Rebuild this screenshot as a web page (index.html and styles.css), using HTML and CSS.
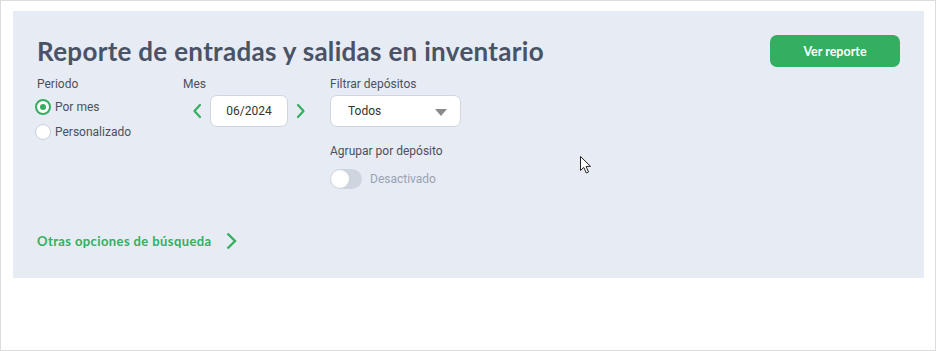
FILE: index.html
```html
<!DOCTYPE html>
<html lang="es">
<head>
<meta charset="utf-8">
<title>Reporte de entradas y salidas en inventario</title>
<link rel="stylesheet" href="styles.css">
</head>
<body>
<div class="frame">
  <section class="panel">
    <header class="head">
      <h1 class="title">Reporte de entradas y salidas en inventario</h1>
      <button class="btn">Ver reporte</button>
    </header>
    <div class="filters">
      <div class="col col-period">
        <div class="label">Periodo</div>
        <label class="radio on"><span class="dot"></span>Por mes</label>
        <label class="radio"><span class="dot"></span>Personalizado</label>
      </div>
      <div class="col col-month">
        <div class="label">Mes</div>
        <div class="month-row">
          <svg class="chev" width="10" height="16" viewBox="0 0 10 16"><path d="M8 2 L2.5 8 L8 14" fill="none" stroke="#34ae60" stroke-width="2.2" stroke-linecap="round" stroke-linejoin="round"/></svg>
          <div class="box month">06/2024</div>
          <svg class="chev" width="10" height="16" viewBox="0 0 10 16"><path d="M2 2 L7.5 8 L2 14" fill="none" stroke="#34ae60" stroke-width="2.2" stroke-linecap="round" stroke-linejoin="round"/></svg>
        </div>
      </div>
      <div class="col col-dep">
        <div class="label">Filtrar depósitos</div>
        <div class="box select">Todos<span class="caret"></span></div>
        <div class="label label-group">Agrupar por depósito</div>
        <div class="toggle-row"><span class="toggle"><span class="knob"></span></span><span class="toggle-text">Desactivado</span></div>
      </div>
    </div>
    <a class="more" href="#">Otras opciones de búsqueda<svg class="more-chev" width="13" height="18" viewBox="0 0 13 18"><path d="M2.5 1.5 L10 9 L2.5 16.5" fill="none" stroke="#34ae60" stroke-width="2.4" stroke-linejoin="miter"/></svg></a>
  </section>
  <svg class="cursor" width="14" height="20" viewBox="0 0 14 20"><path d="M1.5 1.5 L1.5 15.5 L4.8 12.4 L7.3 18 L9.5 17 L7.1 11.5 L11.5 11.3 Z" fill="#fff" stroke="#222" stroke-width="1" stroke-linejoin="miter"/></svg>
</div>
</body>
</html>
```
FILE: styles.css
```css
* { box-sizing: border-box; }
html, body { margin: 0; padding: 0; background: #fff; }
body { font-family: Roboto, "Liberation Sans", Arial, sans-serif; }
.frame {
  position: relative;
  width: 936px;
  height: 351px;
  border: 1px solid #dcdcdc;
  padding: 10px 11px 0 12px;
}
.panel {
  background: #e7ebf3;
  width: 911px;
  height: 267px;
  padding: 24px 24px 0 24px;
  display: flex;
  flex-direction: column;
}
.head {
  display: flex;
  justify-content: space-between;
  align-items: flex-start;
}
.title {
  margin: 0;
  font-family: Lato, sans-serif;
  font-weight: 700;
  font-size: 26px;
  line-height: 30px;
  color: #4a5365;
  padding-top: 1px;
  letter-spacing: 0.3px;
}
.btn {
  width: 130px;
  height: 32px;
  border: 0;
  border-radius: 7px;
  background: #34ae60;
  color: #fff;
  font-family: Lato, sans-serif;
  font-weight: 700;
  font-size: 12.5px;
}
.filters {
  display: flex;
  margin-top: 9px;
}
.col { display: flex; flex-direction: column; }
.col-period { width: 146px; }
.col-month { width: 147px; }
.label {
  font-size: 12px;
  line-height: 16px;
  color: #4b5060;
}
.radio {
  display: flex;
  align-items: center;
  font-size: 12px;
  line-height: 16px;
  color: #4b5060;
  height: 25px;
}
.col-period .label { margin-bottom: 2px; }
.dot {
  width: 16px;
  height: 16px;
  border-radius: 50%;
  background: #fff;
  border: 1.5px solid #c9d0dc;
  margin-right: 4px;
  margin-left: -2px;
  position: relative;
}
.radio.on .dot {
  border: 2px solid #34ae60;
}
.radio.on .dot::after {
  content: "";
  position: absolute;
  left: 3px; top: 3px;
  width: 6px; height: 6px;
  border-radius: 50%;
  background: #34ae60;
}
.month-row {
  display: flex;
  align-items: center;
  margin-top: 3px;
  margin-left: 9px;
  gap: 8px;
}
.box {
  background: #fff;
  border: 1px solid #cfd5e0;
  border-radius: 7px;
  height: 32px;
  display: flex;
  align-items: center;
  font-size: 12px;
  color: #333;
}
.month { width: 78px; justify-content: center; }
.select {
  width: 131px;
  padding-left: 17px;
  margin-top: 3px;
  position: relative;
}
.caret {
  position: absolute;
  right: 13px;
  top: 13px;
  width: 0; height: 0;
  border-left: 6px solid transparent;
  border-right: 6px solid transparent;
  border-top: 7px solid #8a8a8a;
}
.label-group { margin-top: 16px; }
.toggle-row {
  display: flex;
  align-items: center;
  margin-top: 10px;
  gap: 8px;
}
.toggle {
  width: 32px;
  height: 20px;
  border-radius: 10px;
  background: #cfd5df;
  position: relative;
}
.knob {
  position: absolute;
  left: 1px; top: 1px;
  width: 18px; height: 18px;
  border-radius: 50%;
  background: #fff;
}
.toggle-text { font-size: 12px; color: #9aa3b3; }
.more {
  margin-top: auto;
  margin-bottom: 28px;
  display: flex;
  align-items: center;
  font-family: Lato, sans-serif;
  font-weight: 700;
  font-size: 13px;
  color: #34ae60;
  text-decoration: none;
  letter-spacing: 0.4px;
}
.more-chev { margin-left: 13px; }
.cursor { position: absolute; left: 578px; top: 154px; }
```
